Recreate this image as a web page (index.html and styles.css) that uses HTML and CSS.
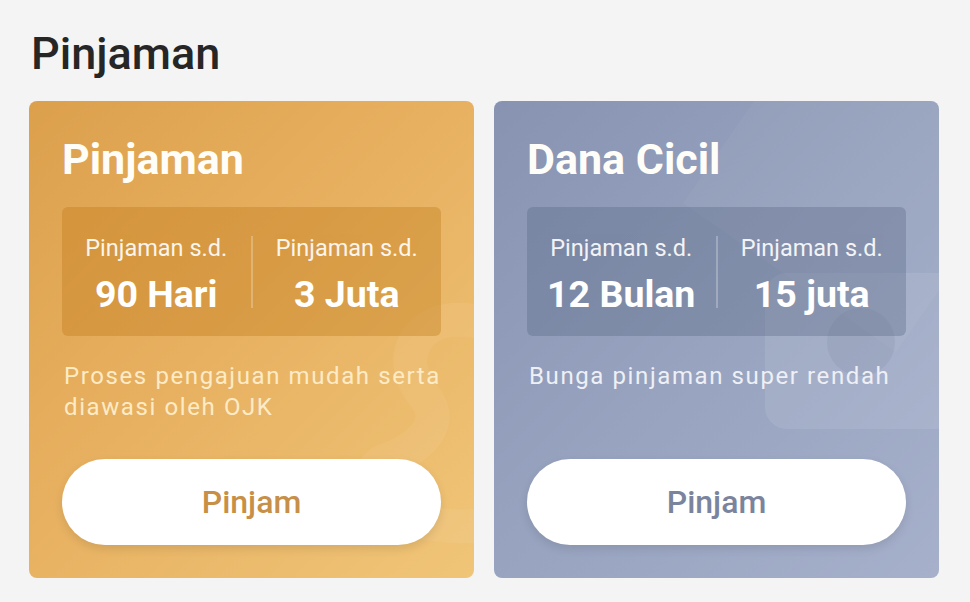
FILE: index.html
```html
<!DOCTYPE html>
<html lang="id">
  <head>
    <meta charset="UTF-8" />
    <meta name="viewport" content="width=device-width, initial-scale=1.0" />
    <title>Pinjaman</title>
    <link rel="stylesheet" href="styles.css">
  </head>
  <body>
    <div class="page">
      <h1 class="page-title">Pinjaman</h1>
      <div class="products">
        <div class="product gold">
          <svg class="deco" width="120" height="260" viewBox="0 0 120 260">
            <path d="M120 20 C60 10 40 60 70 95 C95 125 60 150 30 160 C0 175 20 230 120 225" fill="none" stroke="#ffffff" stroke-opacity="0.06" stroke-width="34" stroke-linecap="round" />
          </svg>
          <h2 class="product-name">Pinjaman</h2>
          <div class="stats">
            <div class="stat">
              <span class="stat-label">Pinjaman s.d.</span>
              <span class="stat-value">90 Hari</span>
            </div>
            <div class="divider"></div>
            <div class="stat">
              <span class="stat-label">Pinjaman s.d.</span>
              <span class="stat-value">3 Juta</span>
            </div>
          </div>
          <p class="desc">Proses pengajuan mudah serta diawasi oleh OJK</p>
          <button class="btn">Pinjam</button>
        </div>

        <div class="product blue">
          <div class="deco-band"></div>
          <div class="deco-card"></div>
          <div class="deco-dot"></div>
          <h2 class="product-name">Dana Cicil</h2>
          <div class="stats">
            <div class="stat">
              <span class="stat-label">Pinjaman s.d.</span>
              <span class="stat-value">12 Bulan</span>
            </div>
            <div class="divider"></div>
            <div class="stat">
              <span class="stat-label">Pinjaman s.d.</span>
              <span class="stat-value">15 juta</span>
            </div>
          </div>
          <p class="desc">Bunga pinjaman super rendah</p>
          <button class="btn">Pinjam</button>
        </div>
      </div>
    </div>
  </body>
</html>
```

FILE: styles.css
```css
body {
  margin: 0;
  background-color: #f4f4f4;
  font-family: Roboto, "Noto Sans", sans-serif;
}
.page {
  padding: 26px 31px 0 29px;
}
.page-title {
  margin: 0 0 19px 2px;
  font-size: 45px;
  font-weight: 500;
  line-height: 56px;
  color: #262626;
}
.products {
  display: grid;
  grid-template-columns: 445px 445px;
  gap: 20px;
}
.product {
  position: relative;
  overflow: hidden;
  height: 477px;
  box-sizing: border-box;
  padding: 34px 33px 0 33px;
  border-radius: 8px;
  display: flex;
  flex-direction: column;
}
.gold {
  background: linear-gradient(135deg, #dca04c 0%, #e7b060 45%, #f0c578 100%);
}
.blue {
  background: linear-gradient(135deg, #8793b1 0%, #97a3bf 50%, #a6b0cb 100%);
}
.deco {
  position: absolute;
  right: 0;
  top: 200px;
}
.deco-band {
  position: absolute;
  left: 240px;
  top: -60px;
  width: 260px;
  height: 260px;
  transform: rotate(35deg);
  background-color: rgba(255, 255, 255, 0.04);
}
.deco-card {
  position: absolute;
  left: 271px;
  top: 172px;
  width: 200px;
  height: 156px;
  border-radius: 22px;
  background-color: rgba(255, 255, 255, 0.09);
}
.deco-dot {
  position: absolute;
  left: 333px;
  top: 207px;
  width: 68px;
  height: 68px;
  border-radius: 50%;
  background-color: rgba(90, 100, 130, 0.1);
}
.product-name {
  position: relative;
  margin: 0;
  font-size: 43px;
  font-weight: 700;
  line-height: 48px;
  color: #fffdf8;
}
.stats {
  position: relative;
  margin-top: 24px;
  height: 129px;
  border-radius: 6px;
  display: flex;
  align-items: center;
}
.gold .stats {
  background-color: rgba(190, 118, 20, 0.35);
}
.blue .stats {
  background-color: rgba(90, 102, 132, 0.35);
}
.stat {
  flex: 1;
  display: flex;
  flex-direction: column;
  align-items: center;
  padding-top: 4px;
  color: #fff;
}
.stat-label {
  font-size: 23.5px;
  line-height: 28px;
  opacity: 0.9;
}
.stat-value {
  margin-top: 12px;
  font-size: 37.5px;
  font-weight: 700;
  line-height: 40px;
}
.divider {
  width: 2px;
  height: 72px;
  background-color: rgba(255, 255, 255, 0.25);
}
.desc {
  position: relative;
  margin: 25px 0 0 2px;
  font-size: 24px;
  line-height: 31px;
  letter-spacing: 1.6px;
}
.gold .desc {
  color: #fdebc6;
}
.blue .desc {
  color: #eef0f6;
}
.btn {
  position: relative;
  margin-top: auto;
  margin-bottom: 33px;
  height: 86px;
  border: none;
  border-radius: 43px;
  background-color: #fff;
  box-shadow: 0 4px 10px rgba(0, 0, 0, 0.1);
  font-family: inherit;
  font-size: 32px;
  font-weight: 500;
  cursor: pointer;
}
.gold .btn {
  color: #c78f47;
}
.blue .btn {
  color: #7b849d;
}
```
